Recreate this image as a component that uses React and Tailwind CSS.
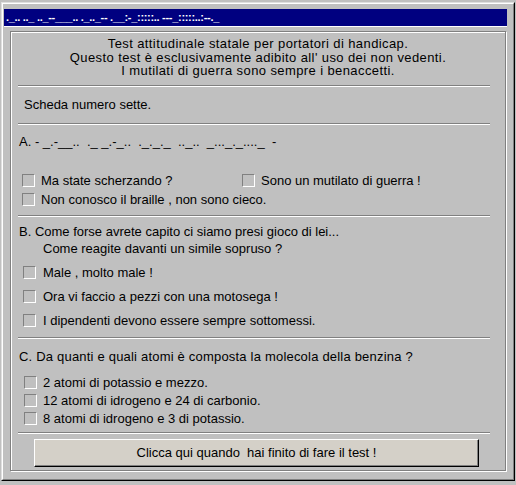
import React from 'react';

const font = { fontFamily: '"Liberation Sans", Arial, sans-serif' };

const Separator = ({ className = '' }) => (
  <div className={`ml-[7px] w-[472px] border-t border-b border-t-[#808080] border-b-white ${className}`} />
);

const CheckBox = () => (
  <span className="inline-block w-[13px] h-[13px] shrink-0 border border-t-[#808080] border-l-[#808080] border-r-white border-b-white bg-[#c0c0c0]" />
);

const Option = ({ label, className = '', gap = 'gap-[6px]' }) => (
  <label className={`flex h-[16px] items-center ${gap} ${className}`}>
    <CheckBox />
    <span>{label}</span>
  </label>
);

export default function App() {
  return (
    <div className="w-[516px] h-[485px] bg-[#c0c0c0] pt-[2px] pl-[1px] pr-[1px] overflow-hidden text-[13px] text-black" style={font}>
      <div className="h-[479px] border border-t-[#dfdfdf] border-l-[#dfdfdf] border-r-black border-b-black">
        <div className="h-full border border-t-white border-l-white border-r-[#808080] border-b-[#808080] pt-[5px] pl-[1px] pr-[6px]">
          {/* title bar */}
          <div className="h-[17px] bg-[#000080] flex items-center pl-[2px] text-white font-bold text-[11px] leading-none tracking-[-0.3px] whitespace-pre">
            ._.. .._ .._--___.. ._.._-- .__:-_:::::.. ---_:::::..:--._
          </div>

          {/* client area */}
          <div className="border-t border-white pt-[4px] pl-[6px] pr-[1px]">
            <div className="h-[440px] border border-[#808080] shadow-[inset_1px_1px_0_#fff,1px_1px_0_#fff]">
              {/* header */}
              <div className="pt-[5px] text-center leading-[13.5px] tracking-[0.4px]">
                <p>Test attitudinale statale per portatori di handicap.</p>
                <p>Questo test è esclusivamente adibito all' uso dei non vedenti.</p>
                <p>I mutilati di guerra sono sempre i benaccetti.</p>
              </div>
              <Separator className="mt-[7px]" />

              <div className="mt-[10px] h-[16px] flex items-center pl-[13px]">Scheda numero sette.</div>
              <Separator className="mt-[10px]" />

              {/* A */}
              <div className="mt-[9px] h-[16px] flex items-center pl-[8px] whitespace-pre">
                A. - _.-__..  ._ _.-_..  ._._._  .._..  _..._._...._  -
              </div>
              <div className="mt-[23px] flex pl-[11px]">
                <Option label="Ma state scherzando ?" className="w-[220px]" />
                <Option label="Sono un mutilato di guerra !" />
              </div>
              <Option label="Non conosco il braille , non sono cieco." className="mt-[3px] pl-[11px]" />
              <Separator className="mt-[7px]" />

              {/* B */}
              <div className="mt-[7px] h-[16px] flex items-center pl-[8px]">
                B. Come forse avrete capito ci siamo presi gioco di lei...
              </div>
              <div className="mt-[1px] h-[16px] flex items-center pl-[32px]">
                Come reagite davanti un simile sopruso ?
              </div>
              <Option label="Male , molto male !" className="mt-[8px] pl-[12px]" gap="gap-[7px]" />
              <Option label="Ora vi faccio a pezzi con una motosega !" className="mt-[8px] pl-[12px]" gap="gap-[7px]" />
              <Option label="I dipendenti devono essere sempre sottomessi." className="mt-[8px] pl-[12px]" gap="gap-[7px]" />
              <Separator className="mt-[8px]" />

              {/* C */}
              <div className="mt-[10px] h-[16px] flex items-center pl-[8px] tracking-[0.2px]">
                C. Da quanti e quali atomi è composta la molecola della benzina ?
              </div>
              <Option label="2 atomi di potassio e mezzo." className="mt-[10px] pl-[13px]" />
              <Option label="12 atomi di idrogeno e 24 di carbonio." className="mt-[2px] pl-[13px]" />
              <Option label="8 atomi di idrogeno e 3 di potassio." className="mt-[2px] pl-[13px]" />
              <Separator className="mt-[5px]" />

              <button
                type="button"
                className="mt-[5px] ml-[23px] w-[445px] h-[28px] bg-[#d4d0c8] border border-t-white border-l-white border-r-black border-b-black shadow-[inset_-1px_-1px_0_#808080] text-[13px] text-black"
                style={font}
              >
                Clicca qui quando&nbsp; hai finito di fare il test !
              </button>
            </div>
          </div>
        </div>
      </div>
    </div>
  );
}
